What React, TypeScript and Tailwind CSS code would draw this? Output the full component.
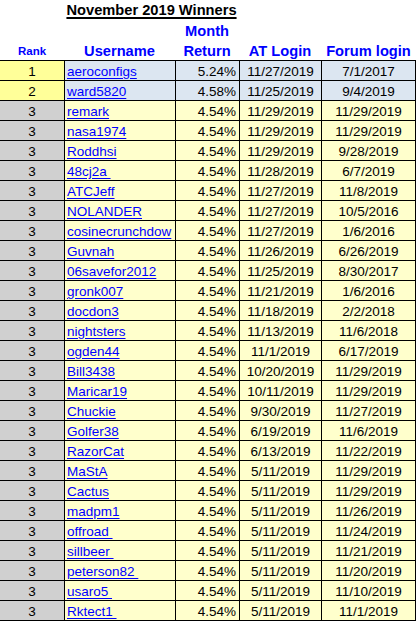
import React from "react";

type Row = [string, string, string, string, string];

const rows: Row[] = [
  ["1", "aeroconfigs", "5.24%", "11/27/2019", "7/1/2017"],
  ["2", "ward5820", "4.58%", "11/25/2019", "9/4/2019"],
  ["3", "remark", "4.54%", "11/29/2019", "11/29/2019"],
  ["3", "nasa1974", "4.54%", "11/29/2019", "11/29/2019"],
  ["3", "Roddhsi", "4.54%", "11/29/2019", "9/28/2019"],
  ["3", "48cj2a ", "4.54%", "11/28/2019", "6/7/2019"],
  ["3", "ATCJeff", "4.54%", "11/27/2019", "11/8/2019"],
  ["3", "NOLANDER", "4.54%", "11/27/2019", "10/5/2016"],
  ["3", "cosinecrunchdow", "4.54%", "11/27/2019", "1/6/2016"],
  ["3", "Guvnah", "4.54%", "11/26/2019", "6/26/2019"],
  ["3", "06savefor2012", "4.54%", "11/25/2019", "8/30/2017"],
  ["3", "gronk007", "4.54%", "11/21/2019", "1/6/2016"],
  ["3", "docdon3", "4.54%", "11/18/2019", "2/2/2018"],
  ["3", "nightsters", "4.54%", "11/13/2019", "11/6/2018"],
  ["3", "ogden44", "4.54%", "11/1/2019", "6/17/2019"],
  ["3", "Bill3438", "4.54%", "10/20/2019", "11/29/2019"],
  ["3", "Maricar19", "4.54%", "10/11/2019", "11/29/2019"],
  ["3", "Chuckie", "4.54%", "9/30/2019", "11/27/2019"],
  ["3", "Golfer38", "4.54%", "6/19/2019", "11/6/2019"],
  ["3", "RazorCat", "4.54%", "6/13/2019", "11/22/2019"],
  ["3", "MaStA", "4.54%", "5/11/2019", "11/29/2019"],
  ["3", "Cactus", "4.54%", "5/11/2019", "11/29/2019"],
  ["3", "madpm1", "4.54%", "5/11/2019", "11/26/2019"],
  ["3", "offroad ", "4.54%", "5/11/2019", "11/24/2019"],
  ["3", "sillbeer ", "4.54%", "5/11/2019", "11/21/2019"],
  ["3", "peterson82 ", "4.54%", "5/11/2019", "11/20/2019"],
  ["3", "usaro5 ", "4.54%", "5/11/2019", "11/10/2019"],
  ["3", "Rktect1 ", "4.54%", "5/11/2019", "11/1/2019"],
];

const head = "font-['Liberation_Sans',Arial,sans-serif] font-bold text-[#0000ff] text-[14.67px] leading-[20px] translate-y-[1px]";

export default function App() {
  return (
    <div className="w-[416px] h-[621px] bg-white overflow-hidden font-['Liberation_Sans',Arial,sans-serif]">
      {/* Title row */}
      <div className="flex h-[20px]">
        <div className="w-[64px]" />
        <div className="w-[175px] flex justify-center">
          <span className="font-bold text-black text-[14.67px] leading-[20px] underline underline-offset-[2px] decoration-[1.5px]">
            November 2019 Winners
          </span>
        </div>
      </div>
      {/* Header row */}
      <div className="flex h-[40px] items-end">
        <div className="w-[64px] text-center">
          <span className="font-bold text-[#0000ff] text-[11.5px] leading-[20px] block translate-y-[1px]">Rank</span>
        </div>
        <div className={`w-[111px] text-center ${head}`}>Username</div>
        <div className={`w-[64px] text-center ${head}`}>
          Month
          <br />
          Return
        </div>
        <div className={`w-[82px] text-center ${head}`}>AT Login</div>
        <div className={`w-[95px] text-center ${head}`}>Forum login</div>
      </div>
      {/* Data rows */}
      <div className="border-b border-black">
        {rows.map((r, i) => {
          const top = i < 2;
          return (
            <div key={i} className="flex h-[20px] border-t border-black text-[13.5px] leading-[16px] text-black">
              <div className={`w-[64px] flex items-end justify-center ${top ? "bg-[#ffff99]" : "bg-[#d0d0d0]"}`}>
                {r[0]}
              </div>
              <div className={`w-[111px] border-l border-black flex items-end pl-[2px] overflow-hidden whitespace-pre ${top ? "bg-[#dce6f1]" : "bg-[#ffffcc]"}`}>
                <span className="text-[#0000ff] underline underline-offset-[2px]">{r[1]}</span>
              </div>
              <div className={`w-[64px] border-l border-black flex items-end justify-end pr-[3px] ${top ? "bg-[#dce6f1]" : "bg-[#ffffcc]"}`}>
                {r[2]}
              </div>
              <div className={`w-[82px] border-l border-black flex items-end justify-center ${top ? "bg-[#dce6f1]" : "bg-[#ffffcc]"}`}>
                {r[3]}
              </div>
              <div className={`w-[95px] border-l border-r border-black flex items-end justify-center ${top ? "bg-[#dce6f1]" : "bg-[#ffffcc]"}`}>
                {r[4]}
              </div>
            </div>
          );
        })}
      </div>
    </div>
  );
}
